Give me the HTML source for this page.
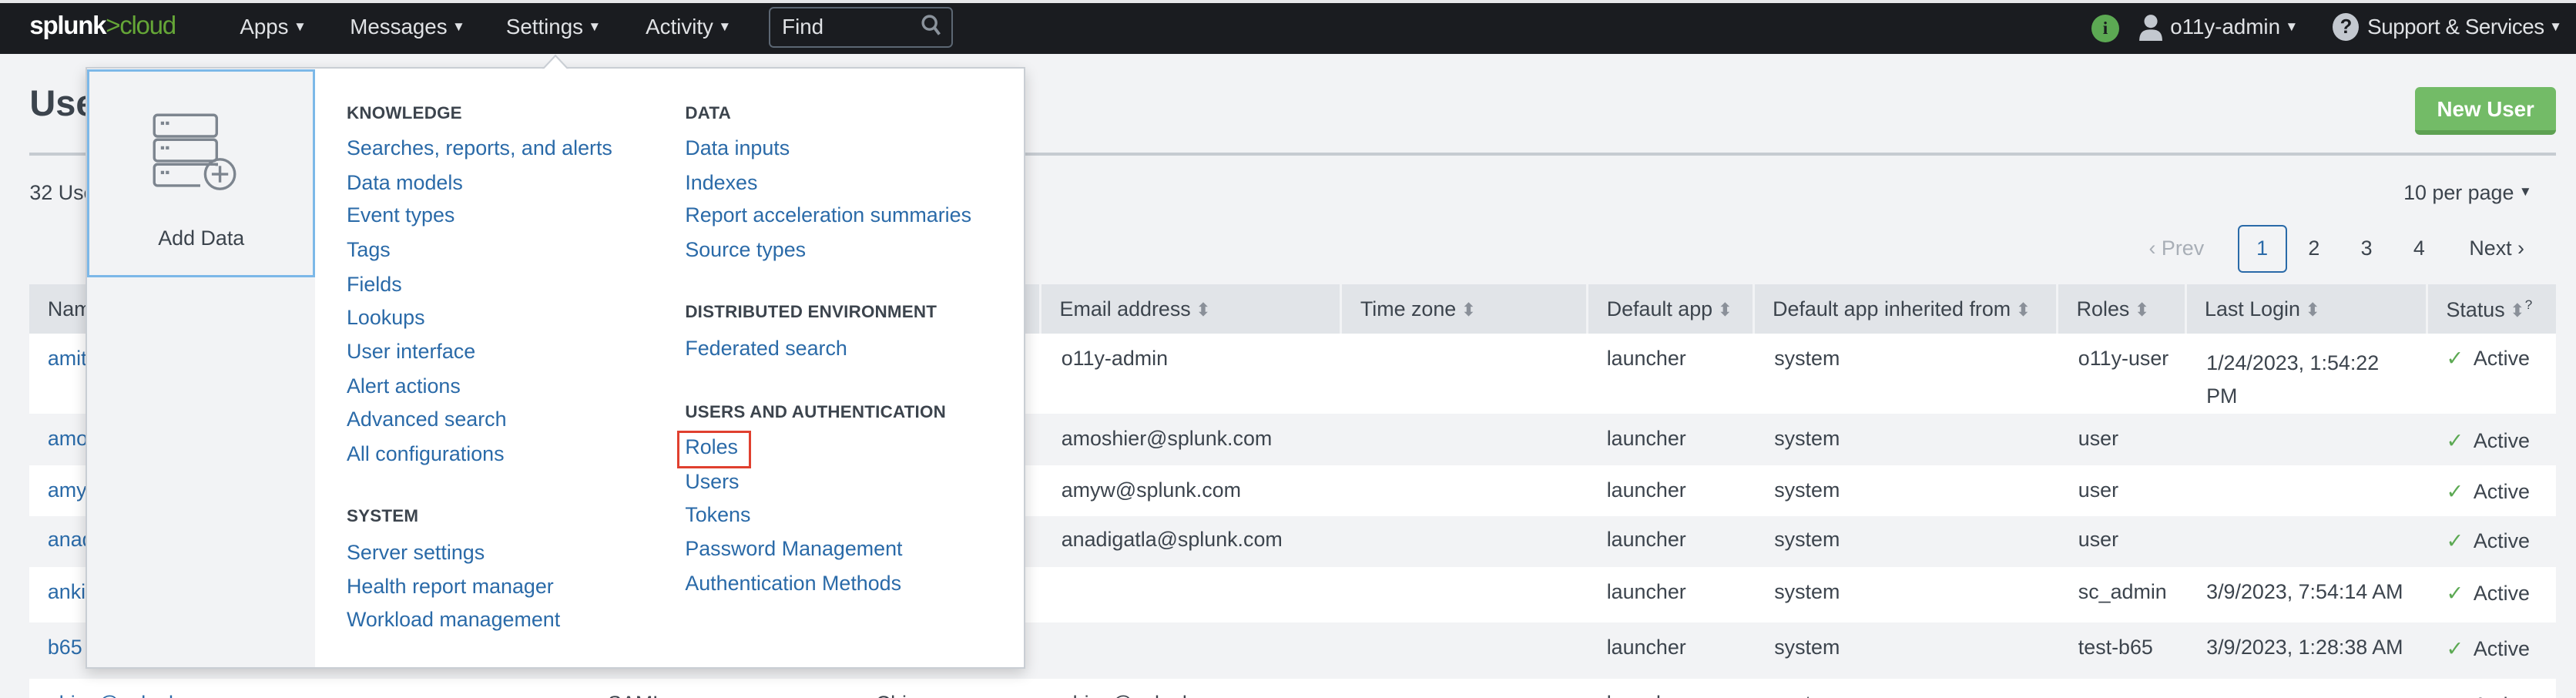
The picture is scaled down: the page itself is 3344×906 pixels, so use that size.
<!DOCTYPE html>
<html><head><meta charset="utf-8"><style>
*{margin:0;padding:0;box-sizing:border-box}
html,body{width:3344px;height:906px;overflow:hidden;background:#f2f3f5}
#w{zoom:2.13265;width:1568px;height:425px;position:relative;font-family:"Liberation Sans",sans-serif;color:#3c444d;font-size:12.6px;overflow:hidden}
.a{position:absolute;white-space:nowrap}
.nav{position:absolute;left:0;top:2px;width:1568px;height:31px;background:#1a1c20}
.nv{color:#e0e2e5;font-size:13px;top:9px}
.car{font-size:8px;vertical-align:2px;margin-left:3px}
.lk{color:#2a6aa8}
.hd{font-size:10.5px;font-weight:bold;color:#3c444d;letter-spacing:.1px}
.th{position:absolute;top:173px;height:30px;background:#e1e4e8;border-right:1.5px solid #f2f3f5;font-size:12.6px;padding:8px 0 0 11px;color:#3c444d;white-space:nowrap}
.s{font-size:11px;color:#8a9099;vertical-align:0px;margin-left:3px}
.row{position:absolute;left:18px;width:1538px}
.ck{color:#5ca953;margin-right:6px}
</style></head><body><div id="w">
<div class="a" style="left:0;top:0;width:1568px;height:2px;background:#e6e7e9"></div>
<div class="nav"></div>
<div class="a" style="left:18px;top:7px;font-size:15.5px;color:#fff;letter-spacing:-.6px;font-weight:bold">splunk<span style="color:#65a637;font-weight:normal">&gt;cloud</span></div>
<div class="a nv" style="left:146px">Apps<span class="car">▼</span></div>
<div class="a nv" style="left:213px">Messages<span class="car">▼</span></div>
<div class="a nv" style="left:308px">Settings<span class="car">▼</span></div>
<div class="a nv" style="left:393px">Activity<span class="car">▼</span></div>
<div class="a" style="left:468px;top:4px;width:112px;height:25px;border:1px solid #5c6773;border-radius:3px"></div>
<div class="a nv" style="left:476px">Find</div>
<svg class="a" style="left:561px;top:9px" width="12" height="14" viewBox="0 0 12 14"><circle cx="5" cy="5" r="4" fill="none" stroke="#8b939c" stroke-width="1.6"/><path d="M8 8l3 4" stroke="#8b939c" stroke-width="1.8"/></svg>
<div class="a" style="left:1273px;top:9px;width:17px;height:17px;border-radius:50%;background:#5ca953;color:#1a1c20;font-size:11px;font-weight:bold;text-align:center;line-height:17px;font-family:'Liberation Serif',serif">i</div>
<svg class="a" style="left:1301px;top:8px" width="16" height="17" viewBox="0 0 16 17"><circle cx="8" cy="5" r="4" fill="#c3c8cf"/><path d="M1 17c0-6 3-7 7-7s7 1 7 7z" fill="#c3c8cf"/></svg>
<div class="a nv" style="left:1321px">o11y-admin<span class="car">▼</span></div>
<div class="a" style="left:1420px;top:8px;width:16px;height:17px;border-radius:50%;background:#c3c8cf;color:#1a1c20;font-size:12px;font-weight:bold;text-align:center;line-height:17px">?</div>
<div class="a nv" style="left:1441px;letter-spacing:-.2px">Support &amp; Services<span class="car">▼</span></div>

<div class="a" style="left:18px;top:50px;font-size:22px;font-weight:bold;color:#3c444d">Users</div>
<div class="a" style="left:1470px;top:53px;width:86px;height:29px;background:#73bb67;border-bottom:3px solid #5ea152;border-radius:3px;color:#fff;font-weight:bold;font-size:13px;text-align:center;line-height:27px">New User</div>
<div class="a" style="left:18px;top:93px;width:1538px;height:1.5px;background:#c6cbd1"></div>
<div class="a" style="left:18px;top:110px">32 Users</div>
<div class="a" style="left:1463px;top:110px">10 per page<span class="car">▼</span></div>
<div class="a" style="left:1308px;top:144px;color:#a8aeb6">‹ Prev</div>
<div class="a" style="left:1362px;top:137px;width:30px;height:29px;border:1px solid #2a6aa8;border-radius:3px;color:#2a6aa8;text-align:center;line-height:27px">1</div>
<div class="a" style="left:1405px;top:144px">2</div>
<div class="a" style="left:1437px;top:144px">3</div>
<div class="a" style="left:1469px;top:144px">4</div>
<div class="a" style="left:1503px;top:144px">Next ›</div>

<div class="th" style="left:18px;width:352px">Name<span class="s">⬍</span></div>
<div class="th" style="left:370px;width:163px"></div>
<div class="th" style="left:533px;width:101px"></div>
<div class="th" style="left:634px;width:183px">Email address<span class="s">⬍</span></div>
<div class="th" style="left:817px;width:150px">Time zone<span class="s">⬍</span></div>
<div class="th" style="left:967px;width:101px">Default app<span class="s">⬍</span></div>
<div class="th" style="left:1068px;width:185px">Default app inherited from<span class="s">⬍</span></div>
<div class="th" style="left:1253px;width:78px">Roles<span class="s">⬍</span></div>
<div class="th" style="left:1331px;width:147px">Last Login<span class="s">⬍</span></div>
<div class="th" style="left:1478px;width:78px;border-right:0">Status<span class="s">⬍</span><sup style="font-size:8px">?</sup></div>

<div class="row" style="top:203px;height:49px;background:#fff"></div>
<div class="row" style="top:252px;height:31px;background:#f2f3f5"></div>
<div class="row" style="top:283px;height:31px;background:#fff"></div>
<div class="row" style="top:314px;height:31px;background:#f2f3f5"></div>
<div class="row" style="top:345px;height:34px;background:#fff"></div>
<div class="row" style="top:379px;height:34px;background:#f2f3f5"></div>
<div class="row" style="top:413px;height:20px;background:#fff"></div>

<div class="a lk" style="left:29px;top:211px">amitk</div>
<div class="a" style="left:646px;top:211px">o11y-admin</div>
<div class="a" style="left:978px;top:211px">launcher</div>
<div class="a" style="left:1080px;top:211px">system</div>
<div class="a" style="left:1265px;top:211px">o11y-user</div>
<div class="a" style="left:1343px;top:211px;line-height:20px">1/24/2023, 1:54:22<br>PM</div>
<div class="a" style="left:1489px;top:211px"><span class="ck">✓</span>Active</div>

<div class="a lk" style="left:29px;top:260px">amoshier</div>
<div class="a" style="left:646px;top:260px">amoshier@splunk.com</div>
<div class="a" style="left:978px;top:260px">launcher</div>
<div class="a" style="left:1080px;top:260px">system</div>
<div class="a" style="left:1265px;top:260px">user</div>
<div class="a" style="left:1489px;top:261px"><span class="ck">✓</span>Active</div>

<div class="a lk" style="left:29px;top:291px">amyw</div>
<div class="a" style="left:646px;top:291px">amyw@splunk.com</div>
<div class="a" style="left:978px;top:291px">launcher</div>
<div class="a" style="left:1080px;top:291px">system</div>
<div class="a" style="left:1265px;top:291px">user</div>
<div class="a" style="left:1489px;top:292px"><span class="ck">✓</span>Active</div>

<div class="a lk" style="left:29px;top:321px">anadigatla</div>
<div class="a" style="left:646px;top:321px">anadigatla@splunk.com</div>
<div class="a" style="left:978px;top:321px">launcher</div>
<div class="a" style="left:1080px;top:321px">system</div>
<div class="a" style="left:1265px;top:321px">user</div>
<div class="a" style="left:1489px;top:322px"><span class="ck">✓</span>Active</div>

<div class="a lk" style="left:29px;top:353px">ankit</div>
<div class="a" style="left:978px;top:353px">launcher</div>
<div class="a" style="left:1080px;top:353px">system</div>
<div class="a" style="left:1265px;top:353px">sc_admin</div>
<div class="a" style="left:1343px;top:353px">3/9/2023, 7:54:14 AM</div>
<div class="a" style="left:1489px;top:354px"><span class="ck">✓</span>Active</div>

<div class="a lk" style="left:29px;top:387px">b65</div>
<div class="a" style="left:978px;top:387px">launcher</div>
<div class="a" style="left:1080px;top:387px">system</div>
<div class="a" style="left:1265px;top:387px">test-b65</div>
<div class="a" style="left:1343px;top:387px">3/9/2023, 1:28:38 AM</div>
<div class="a" style="left:1489px;top:388px"><span class="ck">✓</span>Active</div>

<div class="a lk" style="left:29px;top:421px">abing@splunk.com</div>
<div class="a" style="left:370px;top:421px">SAML</div>
<div class="a" style="left:533px;top:421px">Chicago</div>
<div class="a" style="left:646px;top:421px">abing@splunk.com</div>
<div class="a" style="left:978px;top:421px">launcher</div>
<div class="a" style="left:1080px;top:421px">system</div>
<div class="a" style="left:1489px;top:422px"><span class="ck">✓</span>Active</div>

<!-- dropdown -->
<div class="a" style="left:52px;top:41px;width:572px;height:366px;background:#fff;border:1px solid #c9ced4;box-shadow:0 3px 8px rgba(0,0,0,.18)"></div>
<svg class="a" style="left:330px;top:33px" width="16" height="10" viewBox="0 0 16 10"><path d="M0 9.5L8 1 16 9.5" fill="#fff" stroke="#c9ced4"/><rect x="0" y="9" width="16" height="2" fill="#fff"/></svg>
<div class="a" style="left:53px;top:42px;width:139px;height:364px;background:#f2f3f5"></div>
<div class="a" style="left:53px;top:42px;width:139px;height:127px;border:1.5px solid #7cb8e8;background:#f2f3f5"></div>
<svg class="a" style="left:92px;top:68px" width="60" height="50" viewBox="0 0 60 50"><g fill="none" stroke="#7d858f" stroke-width="1.6"><rect x="2" y="2" width="38" height="13" rx="2"/><rect x="2" y="17" width="38" height="13" rx="2"/><path d="M40 33v-1H4a2 2 0 0 0-2 2v9a2 2 0 0 0 2 2h26"/><circle cx="42" cy="38" r="9"/><path d="M42 33v10M37 38h10"/></g><g fill="#7d858f"><rect x="6" y="6" width="2" height="2"/><rect x="9" y="6" width="2" height="2"/><rect x="6" y="21" width="2" height="2"/><rect x="9" y="21" width="2" height="2"/><rect x="6" y="36" width="2" height="2"/><rect x="9" y="36" width="2" height="2"/></g></svg>
<div class="a" style="left:53px;top:138px;width:139px;text-align:center">Add Data</div>

<div class="a hd" style="left:211px;top:63px">KNOWLEDGE</div>
<div class="a lk" style="left:211px;top:83px">Searches, reports, and alerts</div>
<div class="a lk" style="left:211px;top:104px">Data models</div>
<div class="a lk" style="left:211px;top:124px">Event types</div>
<div class="a lk" style="left:211px;top:145px">Tags</div>
<div class="a lk" style="left:211px;top:166px">Fields</div>
<div class="a lk" style="left:211px;top:186px">Lookups</div>
<div class="a lk" style="left:211px;top:207px">User interface</div>
<div class="a lk" style="left:211px;top:228px">Alert actions</div>
<div class="a lk" style="left:211px;top:248px">Advanced search</div>
<div class="a lk" style="left:211px;top:269px">All configurations</div>
<div class="a hd" style="left:211px;top:308px">SYSTEM</div>
<div class="a lk" style="left:211px;top:329px">Server settings</div>
<div class="a lk" style="left:211px;top:350px">Health report manager</div>
<div class="a lk" style="left:211px;top:370px">Workload management</div>

<div class="a hd" style="left:417px;top:63px">DATA</div>
<div class="a lk" style="left:417px;top:83px">Data inputs</div>
<div class="a lk" style="left:417px;top:104px">Indexes</div>
<div class="a lk" style="left:417px;top:124px">Report acceleration summaries</div>
<div class="a lk" style="left:417px;top:145px">Source types</div>
<div class="a hd" style="left:417px;top:184px">DISTRIBUTED ENVIRONMENT</div>
<div class="a lk" style="left:417px;top:205px">Federated search</div>
<div class="a hd" style="left:417px;top:245px">USERS AND AUTHENTICATION</div>
<div class="a" style="left:412px;top:262px;width:45px;height:23px;border:1.5px solid #e0402f"></div>
<div class="a lk" style="left:417px;top:265px">Roles</div>
<div class="a lk" style="left:417px;top:286px">Users</div>
<div class="a lk" style="left:417px;top:306px">Tokens</div>
<div class="a lk" style="left:417px;top:327px">Password Management</div>
<div class="a lk" style="left:417px;top:348px">Authentication Methods</div>
</div></body></html>
